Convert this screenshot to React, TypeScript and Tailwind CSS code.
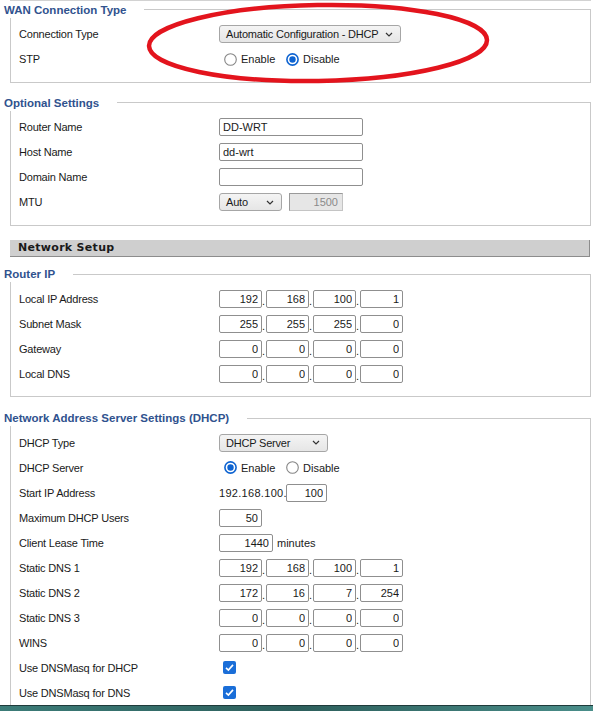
import type { ReactNode } from 'react';

function Section({ title, children, open = false }: { title: string; children: ReactNode; open?: boolean }) {
  return (
    <fieldset
      className={
        open
          ? 'ml-[10px] w-[581px] border border-b-0 border-[#c9c9c9] pl-[8px] pt-[4px] pb-0'
          : 'ml-[10px] w-[581px] border border-[#c9c9c9] pl-[8px] pt-[4px] pb-[10px]'
      }
    >
      <legend className="-ml-[15px] pr-[18px] text-[11.5px] font-bold leading-[16px] text-[#30528e]">{title}</legend>
      {children}
    </fieldset>
  );
}

function Row({ label, children }: { label: string; children?: ReactNode }) {
  return (
    <div className="grid h-[25px] grid-cols-[200px_1fr] items-center">
      <span className="text-[11px] tracking-[-0.2px] text-[#1a1a1a]">{label}</span>
      <div className="flex items-center">{children}</div>
    </div>
  );
}

function TextBox({ value, className }: { value: string; className: string }) {
  return (
    <input
      readOnly
      value={value}
      className={`h-[18px] rounded-[2px] border border-[#8f8f8f] bg-white px-[3px] text-[11px] text-[#1a1a1a] outline-none ${className}`}
    />
  );
}

function IpBox({ parts }: { parts: string[] }) {
  return (
    <div className="flex items-center">
      {parts.map((p, i) => (
        <div key={i} className="flex items-end">
          <TextBox value={p} className="w-[43px] text-right" />
          {i < 3 && <span className="w-[4px] text-[11px] leading-[14px] text-[#1a1a1a]">.</span>}
        </div>
      ))}
    </div>
  );
}

function Chevron() {
  return (
    <svg width="8" height="5" viewBox="0 0 8 5" className="shrink-0">
      <path d="M1 1 L4 4 L7 1" fill="none" stroke="#333" strokeWidth="1.2" />
    </svg>
  );
}

function Select({ value, className }: { value: string; className: string }) {
  return (
    <div
      className={`flex h-[18px] items-center justify-between rounded-[3px] border border-[#a6a6a6] bg-gradient-to-b from-[#f4f4f4] to-[#e6e6e6] pl-[6px] pr-[7px] text-[11px] tracking-[-0.2px] text-[#1a1a1a] ${className}`}
    >
      <span>{value}</span>
      <Chevron />
    </div>
  );
}

function Radio({ checked }: { checked: boolean }) {
  return (
    <svg width="13" height="13" viewBox="0 0 13 13" className="shrink-0">
      {checked ? (
        <>
          <circle cx="6.5" cy="6.5" r="5.6" fill="white" stroke="#0d63d1" strokeWidth="1.6" />
          <circle cx="6.5" cy="6.5" r="3.2" fill="#0d63d1" />
        </>
      ) : (
        <circle cx="6.5" cy="6.5" r="5.8" fill="white" stroke="#858585" strokeWidth="1.1" />
      )}
    </svg>
  );
}

function EnableDisable({ enabled }: { enabled: boolean }) {
  return (
    <div className="ml-[5px] flex items-center text-[11px] text-[#1a1a1a]">
      <div className="flex w-[62px] items-center gap-[4px]">
        <Radio checked={enabled} />
        <span>Enable</span>
      </div>
      <div className="flex items-center gap-[4px]">
        <Radio checked={!enabled} />
        <span>Disable</span>
      </div>
    </div>
  );
}

function Checkbox() {
  return (
    <svg width="13" height="13" viewBox="0 0 13 13" className="ml-[4px]">
      <rect x="0" y="0" width="13" height="13" rx="2" fill="#1a6ed8" />
      <path d="M3 6.8 L5.4 9.1 L10 3.9" fill="none" stroke="white" strokeWidth="1.6" />
    </svg>
  );
}

export default function App() {
  return (
    <div className="relative flex h-[711px] w-[593px] flex-col overflow-hidden bg-white font-['Liberation_Sans',Arial,sans-serif]">
      <div className="ml-[10px] h-px w-[581px] bg-[#d2d2d2]" />

      <div className="mt-[1px]">
        <Section title="WAN Connection Type">
          <Row label="Connection Type">
            <Select value="Automatic Configuration - DHCP" className="w-[182px]" />
          </Row>
          <Row label="STP">
            <EnableDisable enabled={false} />
          </Row>
        </Section>
      </div>

      <div className="mt-[12px]">
        <Section title="Optional Settings">
          <Row label="Router Name">
            <TextBox value="DD-WRT" className="w-[144px]" />
          </Row>
          <Row label="Host Name">
            <TextBox value="dd-wrt" className="w-[144px]" />
          </Row>
          <Row label="Domain Name">
            <TextBox value="" className="w-[144px]" />
          </Row>
          <Row label="MTU">
            <Select value="Auto" className="w-[63px]" />
            <input
              readOnly
              disabled
              value="1500"
              className="ml-[7px] h-[18px] w-[54px] border border-[#c4c4c4] border-t-[#9a9a9a] border-l-[#9a9a9a] bg-[#e6e6e6] px-[4px] text-right text-[11px] text-[#8a8a8a]"
            />
          </Row>
        </Section>
      </div>

      <div className="mt-[14px] ml-[10px] flex h-[19px] w-[580px] items-center border-r border-b border-[#8c8c8c] bg-[#cfcfcf] pl-[8px]">
        <span className="font-['DejaVu_Sans',Verdana,sans-serif] text-[11px] font-bold tracking-[0.3px] text-[#1a1a1a]">
          Network Setup
        </span>
      </div>

      <div className="mt-[9px]">
        <Section title="Router IP">
          <Row label="Local IP Address">
            <IpBox parts={['192', '168', '100', '1']} />
          </Row>
          <Row label="Subnet Mask">
            <IpBox parts={['255', '255', '255', '0']} />
          </Row>
          <Row label="Gateway">
            <IpBox parts={['0', '0', '0', '0']} />
          </Row>
          <Row label="Local DNS">
            <IpBox parts={['0', '0', '0', '0']} />
          </Row>
        </Section>
      </div>

      <div className="mt-[13px]">
        <Section title="Network Address Server Settings (DHCP)" open>
          <Row label="DHCP Type">
            <Select value="DHCP Server" className="w-[109px]" />
          </Row>
          <Row label="DHCP Server">
            <EnableDisable enabled />
          </Row>
          <Row label="Start IP Address">
            <span className="w-[67px] text-[11px] tracking-[0.3px] text-[#1a1a1a]">192.168.100.</span>
            <TextBox value="100" className="w-[41px] text-right" />
          </Row>
          <Row label="Maximum DHCP Users">
            <TextBox value="50" className="w-[43px] text-right" />
          </Row>
          <Row label="Client Lease Time">
            <TextBox value="1440" className="w-[54px] text-right" />
            <span className="ml-[4px] text-[11px] text-[#1a1a1a]">minutes</span>
          </Row>
          <Row label="Static DNS 1">
            <IpBox parts={['192', '168', '100', '1']} />
          </Row>
          <Row label="Static DNS 2">
            <IpBox parts={['172', '16', '7', '254']} />
          </Row>
          <Row label="Static DNS 3">
            <IpBox parts={['0', '0', '0', '0']} />
          </Row>
          <Row label="WINS">
            <IpBox parts={['0', '0', '0', '0']} />
          </Row>
          <Row label="Use DNSMasq for DHCP">
            <Checkbox />
          </Row>
          <Row label="Use DNSMasq for DNS">
            <Checkbox />
          </Row>
        </Section>
      </div>

      <div className="mt-auto h-[6px] w-full border-t border-[#1f3b3b] bg-gradient-to-r from-[#3c7c78] via-[#2d5f5c] to-[#4a8e8a]" />

      {/* hand-drawn annotation */}
      <svg className="pointer-events-none absolute top-0 left-0" width="593" height="100" viewBox="0 0 593 100">
        <ellipse
          cx="318"
          cy="43"
          rx="169"
          ry="38"
          fill="none"
          stroke="#e3141d"
          strokeWidth="4.5"
          transform="rotate(-1 318 43)"
        />
      </svg>
    </div>
  );
}
